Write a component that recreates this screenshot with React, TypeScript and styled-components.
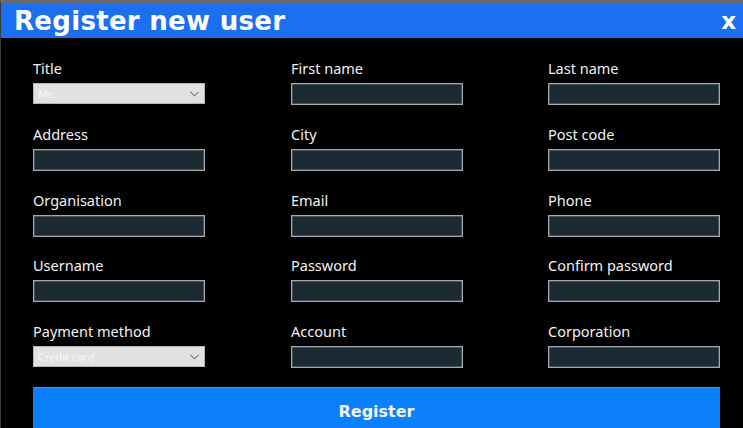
import React from "react";
import styled, {createGlobalStyle} from "styled-components";

const GlobalStyle = createGlobalStyle`
  html, body {
    margin: 0;
    padding: 0;
    background: #000;
  }
  body {
    font-family: "Noto Sans", "DejaVu Sans", sans-serif;
    overflow: hidden;
  }
`;

const Window = styled.div`
  width: 743px;
  height: 428px;
  background: #000;
  border-top: 3px solid #6b6b6b;
  border-left: 1px solid #3a3a3a;
  box-sizing: border-box;
  overflow: hidden;
`;

const Header = styled.header`
  display: flex;
  align-items: center;
  justify-content: space-between;
  height: 35px;
  padding: 0 7px 0 13px;
  background: #1b6ff2;
  color: #fff;
  font-family: "DejaVu Sans", Verdana, sans-serif;
  font-weight: bold;
`;

const Heading = styled.h1`
  margin: 0;
  font-size: 26px;
  letter-spacing: 0.3px;
  line-height: 1;
`;

const Close = styled.span`
  font-size: 23px;
  line-height: 1;
  padding-top: 2px;
`;

const Body = styled.div`
  padding: 21px 0 0 32px;
`;

const Grid = styled.div`
  display: grid;
  grid-template-columns: 258px 257px 172px;
  row-gap: 19.75px;
`;

const Field = styled.div`
  display: flex;
  flex-direction: column;
  gap: 6px;
`;

const Label = styled.label`
  color: #f2f2f2;
  font-size: 14.5px;
  line-height: 18px;
  height: 18px;
`;

const Input = styled.div`
  width: 172px;
  height: 22px;
  box-sizing: border-box;
  background: #1b2a33;
  border: 1px solid #a3a9ad;
  box-shadow: inset 0 0 0 0.5px #6e7a80;
`;

const Select = styled.div`
  display: flex;
  align-items: center;
  justify-content: space-between;
  width: 172px;
  height: 21px;
  box-sizing: border-box;
  padding: 0 5px 0 4px;
  background: #e1e1e1;
  border: 1px solid #b4b4b4;
  color: #f7f7f7;
  font-size: 11px;
`;

const Chevron = () => (
  <svg width="9" height="6" viewBox="0 0 9 6">
    <path d="M0.5 0.8 L4.5 4.8 L8.5 0.8" fill="none" stroke="#7a7a7a" strokeWidth="1.1" />
  </svg>
);

const Button = styled.button`
  display: block;
  width: 687px;
  height: 48px;
  margin-top: 19px;
  padding: 0;
  border: none;
  border-top: 1px solid #3d95ff;
  background: #0a80fd;
  color: #f4f4f4;
  font-family: "DejaVu Sans", Verdana, sans-serif;
  font-weight: bold;
  font-size: 16px;
  text-align: center;
`;

type FieldDef = {label: string; select?: string};

const fields: FieldDef[] = [
  {label: "Title", select: "Mr."},
  {label: "First name"},
  {label: "Last name"},
  {label: "Address"},
  {label: "City"},
  {label: "Post code"},
  {label: "Organisation"},
  {label: "Email"},
  {label: "Phone"},
  {label: "Username"},
  {label: "Password"},
  {label: "Confirm password"},
  {label: "Payment method", select: "Credit card"},
  {label: "Account"},
  {label: "Corporation"},
];

export default function App() {
  return (
    <>
      <GlobalStyle />
      <Window>
        <Header>
          <Heading>Register new user</Heading>
          <Close>x</Close>
        </Header>
        <Body>
          <Grid>
            {fields.map((f) => (
              <Field key={f.label}>
                <Label>{f.label}</Label>
                {f.select ? (
                  <Select>
                    <span>{f.select}</span>
                    <Chevron />
                  </Select>
                ) : (
                  <Input />
                )}
              </Field>
            ))}
          </Grid>
          <Button>Register</Button>
        </Body>
      </Window>
    </>
  );
}
